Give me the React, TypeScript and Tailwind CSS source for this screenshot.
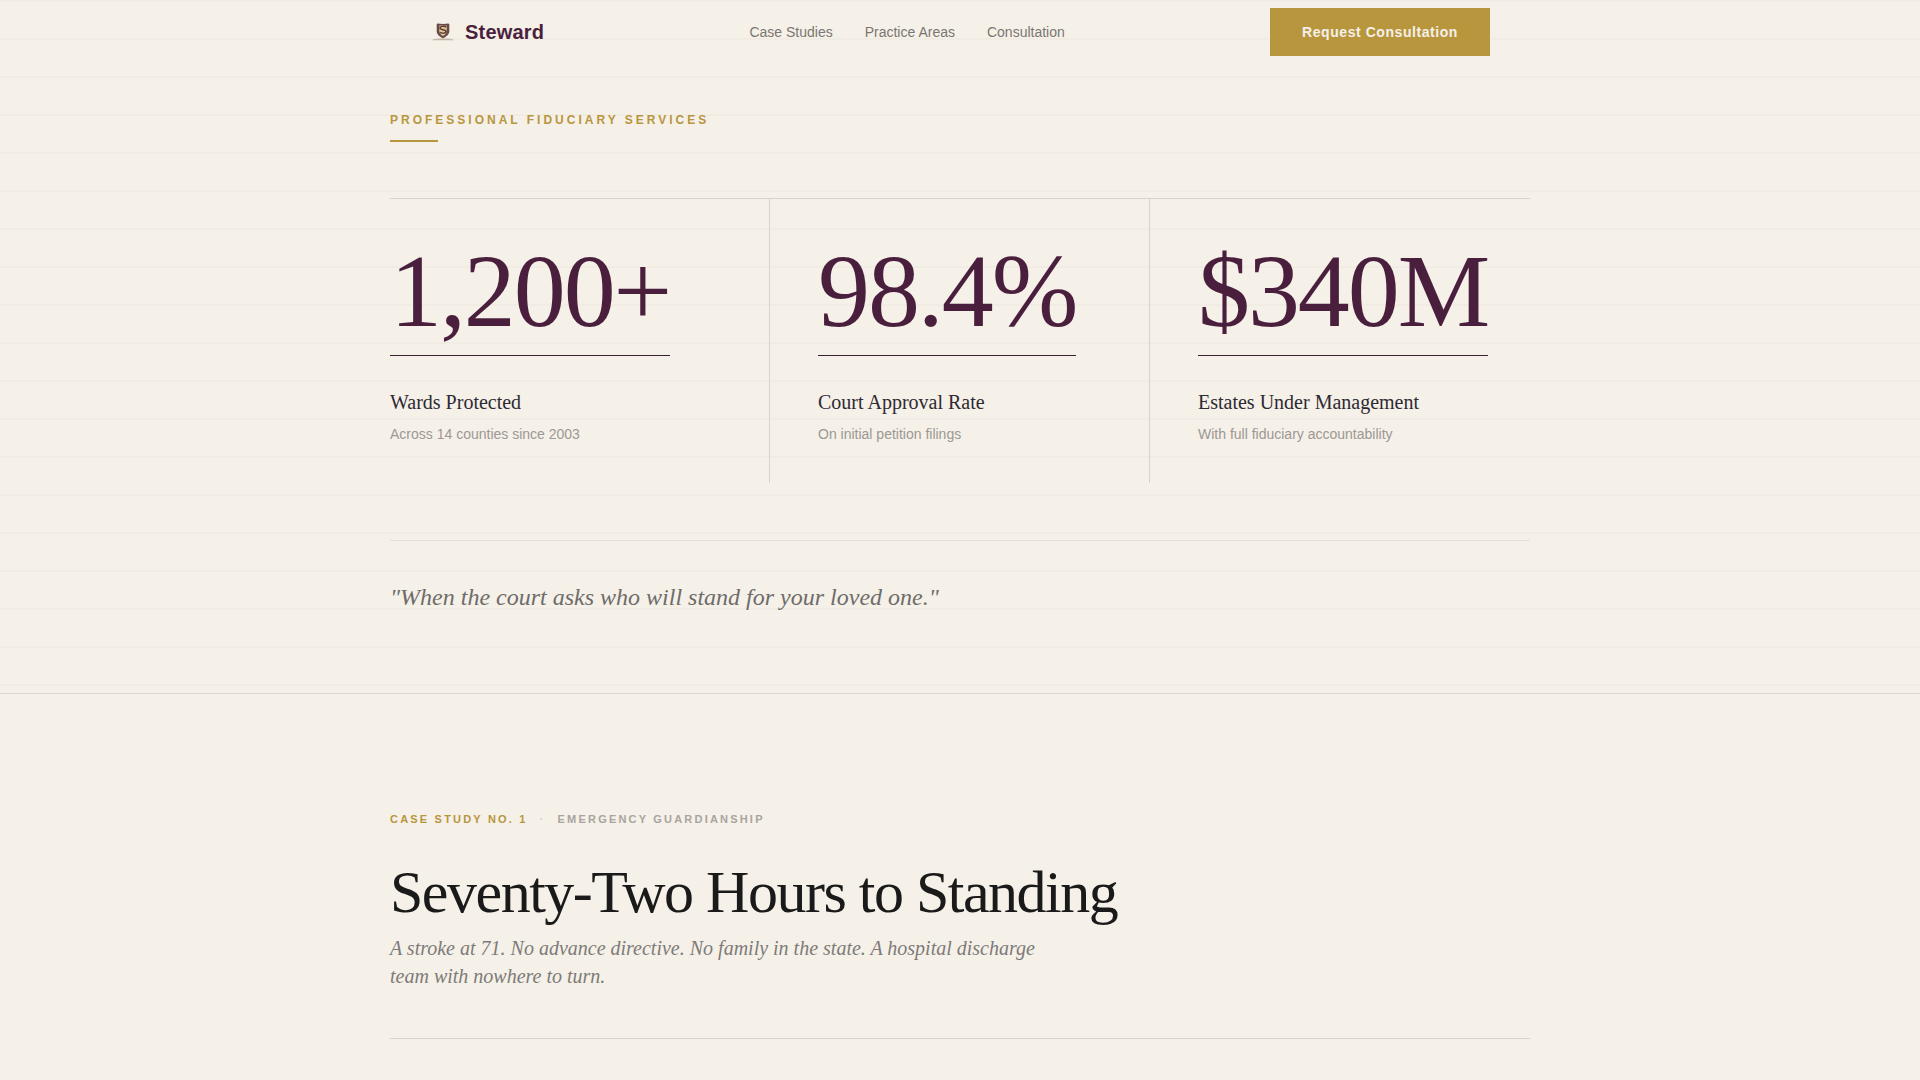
const serif = "font-['Liberation_Serif',serif]";

function Stat({ value, label, note, cls }: { value: string; label: string; note: string; cls: string }) {
  return (
    <div className={cls}>
      <div className={`${serif} inline-block border-b border-[#3a2034] pb-3 text-[104px] leading-[1] tracking-[-2.08px] text-[#4a1f3d]`}>{value}</div>
      <div className={`${serif} mt-[30px] text-[20px] leading-[32px] text-[#2d2a33]`}>{label}</div>
      <div className="mt-[5px] text-sm leading-[22px] text-[#9c9894]">{note}</div>
    </div>
  );
}

export default function App() {
  return (
    <div className="min-h-screen bg-[#f5f0e8] font-['Liberation_Sans',sans-serif]">
      <div className="h-[694px] border-b border-[#dedad3] bg-[repeating-linear-gradient(0deg,transparent_0px,transparent_7px,rgba(74,50,40,0.022)_7px,rgba(74,50,40,0.022)_9px,transparent_9px,transparent_38px)]">
        <nav className="mx-auto flex h-[64px] max-w-[1140px] items-center justify-between px-10">
          <div className="flex items-center gap-[9px]">
            <svg width="26" height="26" viewBox="0 0 26 26">
              <path d="M3 20.500c4-1.500 7-1 10-1s6-.5 10 1l1.500 .8h-23z" fill="#c2b8a9" />
              <path d="M7.500 4.500c3.300 .6 7.700 .6 11 0l.8 .8v7c0 3.500-3.300 5.500-6.300 7c-3-1.500-6.300-3.500-6.300-7v-7z" fill="#6a4a48" />
              <path d="M9.300 6.500h7.400v6c0 2-2.200 3.500-3.700 4.500c-1.500-1-3.700-2.500-3.700-4.500z" fill="#dcc79a" />
              <path d="M16 8.200c-1-1.300-6-1.300-6 .8c0 2.200 6 1.200 6 3.400c0 2.100-5 2.100-6 .9" fill="none" stroke="#5a3a30" strokeWidth="1.400" />
            </svg>
            <span className="text-[20px] font-bold tracking-[0.2px] text-[#4a1f3d]">Steward</span>
          </div>
          <div className="flex gap-8 text-sm text-[#7a7672]">
            <span>Case Studies</span>
            <span>Practice Areas</span>
            <span>Consultation</span>
          </div>
          <div className="flex h-12 w-[220px] items-center justify-center bg-[#b8963e] text-sm font-bold tracking-[0.56px] text-[#f5f0e8]">Request Consultation</div>
        </nav>
        <div className="mx-auto max-w-[1140px] pt-[48px]">
          <div className="text-xs font-bold leading-[16px] tracking-[3px] text-[#b8963e]">PROFESSIONAL FIDUCIARY SERVICES</div>
          <div className="mt-3 h-0.5 w-12 bg-[#b8963e]" />
          <div className="mt-[56px] grid grid-cols-3 border-t border-[#d8d4cc]">
            <Stat value="1,200+" label="Wards Protected" note="Across 14 counties since 2003" cls="h-[284px] border-r border-[#d8d4cc] pt-10" />
            <Stat value="98.4%" label="Court Approval Rate" note="On initial petition filings" cls="h-[284px] border-r border-[#d8d4cc] pl-12 pt-10" />
            <Stat value="$340M" label="Estates Under Management" note="With full fiduciary accountability" cls="h-[284px] pl-12 pt-10" />
          </div>
          <div className={`${serif} mt-[57px] border-t border-[#e4e0d8] pt-[38px] text-2xl italic leading-[36px] text-[#6e6c6a]`}>"When the court asks who will stand for your loved one."</div>
        </div>
      </div>
      <div className="mx-auto max-w-[1140px] pt-[118px]">
        <div className="flex items-center text-[11px] font-bold leading-[14px] tracking-[2.2px]">
          <span className="text-[#b8963e]">CASE STUDY NO. 1</span>
          <span className="mx-3 text-[#d4d0c8]">·</span>
          <span className="text-[#a8a4a0]">EMERGENCY GUARDIANSHIP</span>
        </div>
        <h2 className={`${serif} mt-[33px] text-[60px] leading-[66px] tracking-[-1.5px] text-[#1a1a1a]`}>Seventy-Two Hours to Standing</h2>
        <p className={`${serif} mt-[9px] max-w-[680px] text-[20px] italic leading-[28px] text-[#7d7b78]`}>A stroke at 71. No advance directive. No family in the state. A hospital discharge team with nowhere to turn.</p>
        <div className="mt-[48px] border-t border-[#d8d4cc]" />
      </div>
    </div>
  );
}
